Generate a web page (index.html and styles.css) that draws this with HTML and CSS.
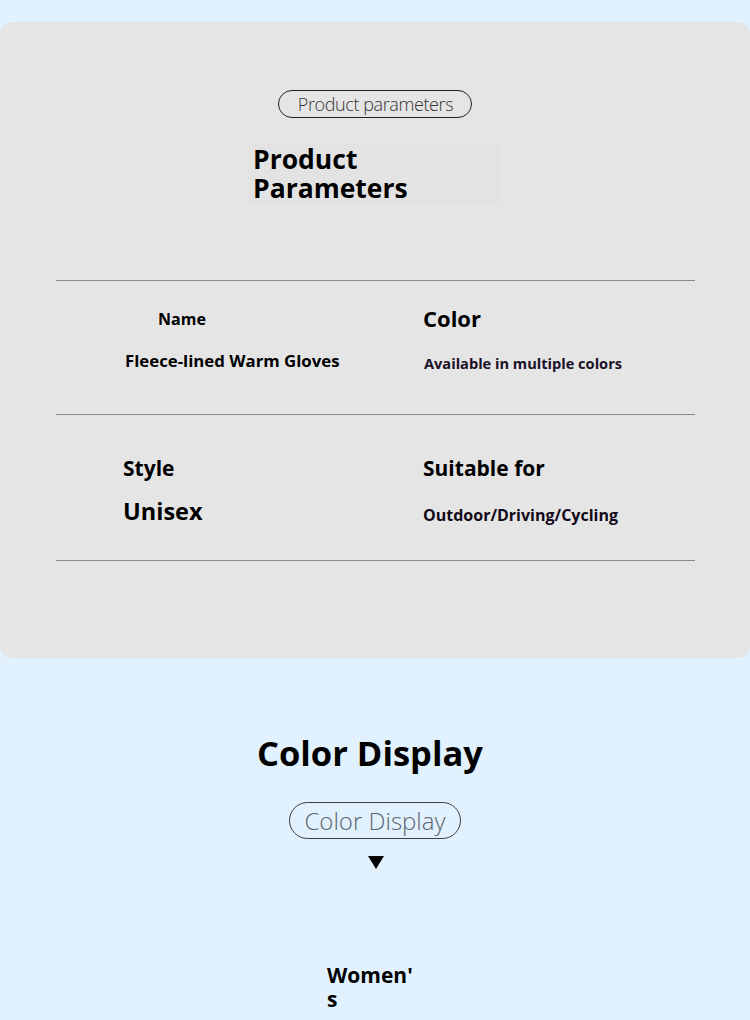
FILE: index.html
```html
<!DOCTYPE html>
<html lang="en">
<head>
  <meta charset="UTF-8" />
  <meta name="viewport" content="width=device-width, initial-scale=1.0" />
  <title>Fleece-lined Warm Gloves</title>
  <link rel="stylesheet" href="styles.css">
</head>
<body>
  <section class="params-card">
    <div class="pill pill-small">Product parameters</div>
    <h2 class="params-title">Product Parameters</h2>

    <div class="params">
      <div class="param-row">
        <div class="param-cell">
          <div class="label label-name">Name</div>
          <div class="value value-name">Fleece-lined Warm Gloves</div>
        </div>
        <div class="param-cell right">
          <div class="label label-color">Color</div>
          <div class="value value-color">Available in multiple colors</div>
        </div>
      </div>
      <div class="param-row tall">
        <div class="param-cell">
          <div class="label label-style">Style</div>
          <div class="value value-style">Unisex</div>
        </div>
        <div class="param-cell right">
          <div class="label label-use">Suitable for</div>
          <div class="value value-use">Outdoor/Driving/Cycling</div>
        </div>
      </div>
    </div>
  </section>

  <section class="colors">
    <h2 class="colors-title">Color Display</h2>
    <div class="pill pill-large">Color Display</div>
    <div class="arrow"></div>
    <div class="variant">Women's</div>
  </section>
</body>
</html>
```

FILE: styles.css
```css
body {
  margin: 0;
  background: #e1f1fd;
  font-family: "Open Sans", "Noto Sans", sans-serif;
  color: #000;
}
.params-card {
  margin-top: 22px;
  height: 636px;
  background: #e5e5e5;
  border-radius: 12px;
  display: flex;
  flex-direction: column;
  align-items: center;
  padding-top: 68px;
  box-sizing: border-box;
}
.pill {
  border: 1px solid #222;
  border-radius: 40px;
  font-weight: 300;
  white-space: nowrap;
}
.pill-small {
  font-size: 18px;
  line-height: 26px;
  padding: 0 18px 0 19px;
  color: #333;
  letter-spacing: -0.4px;
}
.params-title {
  width: 252px;
  margin: 26px 0 0 -2px;
  padding: 1px 5px;
  box-sizing: border-box;
  font-size: 26.5px;
  line-height: 29px;
  font-weight: 700;
  background: #e3e3e3;
}
.params {
  align-self: stretch;
  margin: 76px 55px 0 56px;
  border-top: 1px solid #8a8a8a;
}
.param-row {
  display: grid;
  grid-template-columns: 367px 1fr;
  height: 133px;
  border-bottom: 1px solid #8a8a8a;
}
.param-row.tall {
  height: 145px;
}
.param-cell {
  padding-top: 27px;
}
.label, .value {
  font-weight: 700;
  white-space: nowrap;
}
.label-name {
  font-size: 16px;
  line-height: 22px;
  padding: 0 0 0 102px;
}
.value-name {
  font-size: 16.8px;
  line-height: 22px;
  margin-top: 20px;
  padding-left: 69px;
}
.label-color {
  font-size: 22px;
  line-height: 24px;
  margin-top: -2px;
}
.value-color {
  font-size: 14.6px;
  line-height: 22px;
  margin-top: 22px;
  color: #1c1028;
  padding-left: 1px;
}
.param-row.tall .param-cell {
  padding-top: 40px;
}
.label-style, .label-use {
  font-size: 21px;
  line-height: 26px;
}
.label-style, .value-style {
  padding-left: 67px;
}
.value-style {
  font-size: 23.5px;
  line-height: 30px;
  margin-top: 15px;
}
.value-use {
  font-size: 16px;
  line-height: 22px;
  margin-top: 23px;
  color: #120a18;
}
.colors {
  display: flex;
  flex-direction: column;
  align-items: center;
  padding-top: 72px;
}
.colors-title {
  width: 240px;
  margin: 0;
  padding-left: 2px;
  box-sizing: border-box;
  font-size: 34.5px;
  line-height: 46px;
  font-weight: 700;
}
.pill-large {
  margin-top: 26px;
  font-size: 24px;
  line-height: 35px;
  padding: 0 14px;
  color: #5b6670;
  border-color: #3a3f44;
}
.arrow {
  margin-top: 17px;
  margin-left: 1px;
  width: 0;
  height: 0;
  border-left: 8px solid transparent;
  border-right: 8px solid transparent;
  border-top: 13px solid #000;
}
.variant {
  width: 100px;
  margin-top: 94px;
  padding: 0 8px 0 2px;
  box-sizing: border-box;
  font-size: 21px;
  line-height: 24px;
  font-weight: 700;
  overflow-wrap: anywhere;
}
```
